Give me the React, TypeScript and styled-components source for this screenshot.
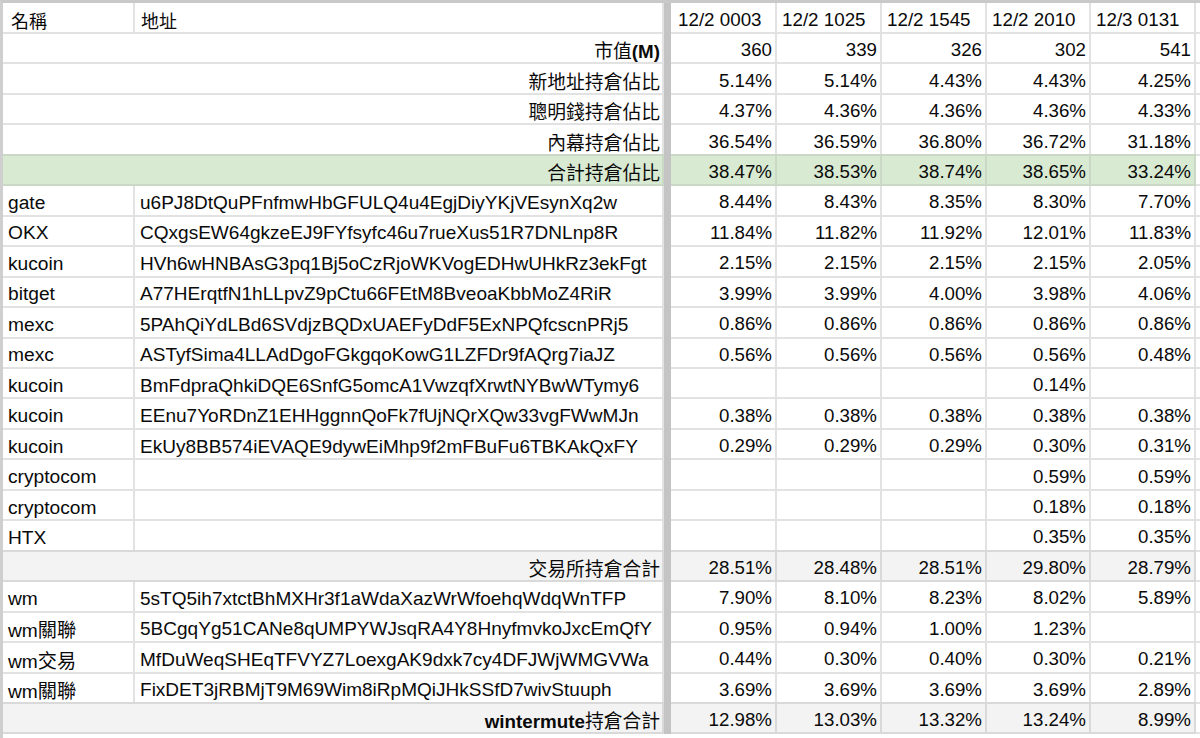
import styled, { createGlobalStyle } from "styled-components";

const GlobalStyle = createGlobalStyle`
  html, body {
    margin: 0;
    padding: 0;
    background: #fff;
    overflow: hidden;
  }
  body {
    font-family: "Liberation Sans", "Noto Sans CJK TC", Arial, sans-serif;
    font-size: 18.8px;
    color: #0a0a0a;
  }
`;

const Sheet = styled.div`
  width: 1200px;
  height: 738px;
  overflow: hidden;
  border-top: 3px solid #c9c9c9;
  border-left: 3px solid #cfcfcf;
  box-sizing: border-box;
`;

const columns = "132px 529px 7px 106px 105px 105px 104px 105px 4px";

const Row = styled.div<{ $head?: boolean }>`
  display: grid;
  grid-template-columns: ${columns};
  height: ${({ $head }) => ($head ? "31px" : "30.46px")};
`;

const toneColor = { plain: "#fff", green: "#d9ead3", gray: "#f3f3f3" };
const lineColor = { plain: "#e2e2e2", green: "#cbd8c6", gray: "#d9d9d9" };

type Tone = keyof typeof toneColor;

const Cell = styled.div<{ $tone?: Tone }>`
  box-sizing: border-box;
  display: flex;
  align-items: center;
  padding: 4px 3px 0 5px;
  white-space: nowrap;
  overflow: hidden;
  background: ${({ $tone }) => toneColor[$tone ?? "plain"]};
  border-right: 2px solid ${({ $tone }) => lineColor[$tone ?? "plain"]};
  border-bottom: 2px solid ${({ $tone }) => lineColor[$tone ?? "plain"]};
  box-shadow: ${({ $tone }) => ($tone ? `0 -2px 0 ${lineColor[$tone]}` : "none")};
`;

const NameCell = styled(Cell)`
  padding-top: 5px;
  font-size: 19.2px;
`;

const AddressCell = styled(Cell)`
  padding-top: 5px;
  font-size: 19.05px;
`;

const NumberCell = styled(Cell)`
  justify-content: flex-end;
  font-size: 18.7px;
`;

const LabelCell = styled(Cell)`
  grid-column: span 2;
  justify-content: flex-end;
  padding-top: 3px;
  padding-right: 2px;
`;

const HeadCell = styled(Cell)`
  padding-left: 8px;
  font-size: 18px;
`;

const HeadAddressCell = styled(Cell)`
  padding-left: 6px;
  font-size: 18px;
`;

const DateCell = styled(Cell)<{ $lead?: boolean }>`
  padding-top: 5px;
  padding-left: ${({ $lead }) => ($lead ? "7px" : "5px")};
`;

const Freeze = styled.div`
  background: #c4c4c4;
`;

const LatinBold = styled.b`
  font-weight: 700;
`;

const dates = ["12/2 0003", "12/2 1025", "12/2 1545", "12/2 2010", "12/3 0131"];

type Summary = { label: React.ReactNode; values: string[]; tone?: Tone };
type Entry = { name: string; address: string; values: string[] };

const topRows: Summary[] = [
  { label: <span>市值<LatinBold>(M)</LatinBold></span>, values: ["360", "339", "326", "302", "541"] },
  { label: "新地址持倉佔比", values: ["5.14%", "5.14%", "4.43%", "4.43%", "4.25%"] },
  { label: "聰明錢持倉佔比", values: ["4.37%", "4.36%", "4.36%", "4.36%", "4.33%"] },
  { label: "內幕持倉佔比", values: ["36.54%", "36.59%", "36.80%", "36.72%", "31.18%"] },
  { label: "合計持倉佔比", values: ["38.47%", "38.53%", "38.74%", "38.65%", "33.24%"], tone: "green" },
];

const exchanges: Entry[] = [
  { name: "gate", address: "u6PJ8DtQuPFnfmwHbGFULQ4u4EgjDiyYKjVEsynXq2w", values: ["8.44%", "8.43%", "8.35%", "8.30%", "7.70%"] },
  { name: "OKX", address: "CQxgsEW64gkzeEJ9FYfsyfc46u7rueXus51R7DNLnp8R", values: ["11.84%", "11.82%", "11.92%", "12.01%", "11.83%"] },
  { name: "kucoin", address: "HVh6wHNBAsG3pq1Bj5oCzRjoWKVogEDHwUHkRz3ekFgt", values: ["2.15%", "2.15%", "2.15%", "2.15%", "2.05%"] },
  { name: "bitget", address: "A77HErqtfN1hLLpvZ9pCtu66FEtM8BveoaKbbMoZ4RiR", values: ["3.99%", "3.99%", "4.00%", "3.98%", "4.06%"] },
  { name: "mexc", address: "5PAhQiYdLBd6SVdjzBQDxUAEFyDdF5ExNPQfcscnPRj5", values: ["0.86%", "0.86%", "0.86%", "0.86%", "0.86%"] },
  { name: "mexc", address: "ASTyfSima4LLAdDgoFGkgqoKowG1LZFDr9fAQrg7iaJZ", values: ["0.56%", "0.56%", "0.56%", "0.56%", "0.48%"] },
  { name: "kucoin", address: "BmFdpraQhkiDQE6SnfG5omcA1VwzqfXrwtNYBwWTymy6", values: ["", "", "", "0.14%", ""] },
  { name: "kucoin", address: "EEnu7YoRDnZ1EHHggnnQoFk7fUjNQrXQw33vgFWwMJn", values: ["0.38%", "0.38%", "0.38%", "0.38%", "0.38%"] },
  { name: "kucoin", address: "EkUy8BB574iEVAQE9dywEiMhp9f2mFBuFu6TBKAkQxFY", values: ["0.29%", "0.29%", "0.29%", "0.30%", "0.31%"] },
  { name: "cryptocom", address: "", values: ["", "", "", "0.59%", "0.59%"] },
  { name: "cryptocom", address: "", values: ["", "", "", "0.18%", "0.18%"] },
  { name: "HTX", address: "", values: ["", "", "", "0.35%", "0.35%"] },
];

const wintermute: Entry[] = [
  { name: "wm", address: "5sTQ5ih7xtctBhMXHr3f1aWdaXazWrWfoehqWdqWnTFP", values: ["7.90%", "8.10%", "8.23%", "8.02%", "5.89%"] },
  { name: "wm關聯", address: "5BCgqYg51CANe8qUMPYWJsqRA4Y8HnyfmvkoJxcEmQfY", values: ["0.95%", "0.94%", "1.00%", "1.23%", ""] },
  { name: "wm交易", address: "MfDuWeqSHEqTFVYZ7LoexgAK9dxk7cy4DFJWjWMGVWa", values: ["0.44%", "0.30%", "0.40%", "0.30%", "0.21%"] },
  { name: "wm關聯", address: "FixDET3jRBMjT9M69Wim8iRpMQiJHkSSfD7wivStuuph", values: ["3.69%", "3.69%", "3.69%", "3.69%", "2.89%"] },
];

const SummaryRow = ({ label, values, tone }: Summary) => (
  <Row>
    <LabelCell $tone={tone}>{label}</LabelCell>
    <Freeze />
    {values.map((v, i) => (
      <NumberCell key={i} $tone={tone}>{v}</NumberCell>
    ))}
    <Cell />
  </Row>
);

const EntryRow = ({ name, address, values }: Entry) => (
  <Row>
    <NameCell>{name}</NameCell>
    <AddressCell>{address}</AddressCell>
    <Freeze />
    {values.map((v, i) => (
      <NumberCell key={i}>{v}</NumberCell>
    ))}
    <Cell />
  </Row>
);

export default function App() {
  return (
    <>
      <GlobalStyle />
      <Sheet>
        <Row $head>
          <HeadCell>名稱</HeadCell>
          <HeadAddressCell>地址</HeadAddressCell>
          <Freeze />
          {dates.map((d, i) => (
            <DateCell key={d} $lead={i === 0}>{d}</DateCell>
          ))}
          <Cell />
        </Row>
        {topRows.map((r, i) => (
          <SummaryRow key={i} {...r} />
        ))}
        {exchanges.map((e, i) => (
          <EntryRow key={i} {...e} />
        ))}
        <SummaryRow
          label="交易所持倉合計"
          tone="gray"
          values={["28.51%", "28.48%", "28.51%", "29.80%", "28.79%"]}
        />
        {wintermute.map((e, i) => (
          <EntryRow key={i} {...e} />
        ))}
        <SummaryRow
          label={<span><LatinBold>wintermute</LatinBold>持倉合計</span>}
          tone="gray"
          values={["12.98%", "13.03%", "13.32%", "13.24%", "8.99%"]}
        />
      </Sheet>
    </>
  );
}
